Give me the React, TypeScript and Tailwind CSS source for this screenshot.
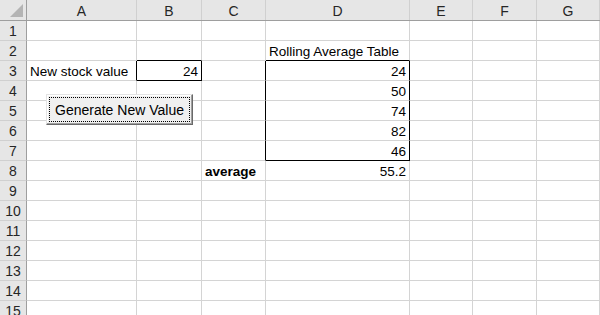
const cols = ["A", "B", "C", "D", "E", "F", "G"];
const colW = [
  "w-[110px]",
  "w-[65px]",
  "w-[64px]",
  "w-[144px]",
  "w-[63px]",
  "w-[64px]",
  "flex-1",
];

type Cell = { text?: string; align?: "left" | "right"; bold?: boolean };

// cell contents, keyed by "row:col"
const data: Record<string, Cell> = {
  "2:3": { text: "Rolling Average Table" },
  "3:0": { text: "New stock value" },
  "3:1": { text: "24", align: "right" },
  "3:3": { text: "24", align: "right" },
  "4:3": { text: "50", align: "right" },
  "5:3": { text: "74", align: "right" },
  "6:3": { text: "82", align: "right" },
  "7:3": { text: "46", align: "right" },
  "8:2": { text: "average", bold: true },
  "8:3": { text: "55.2", align: "right" },
};

// which cells carry the black box edges
const blackRight = new Set(["3:0", "3:1", "3:2", "4:2", "5:2", "6:2", "7:2", "3:3", "4:3", "5:3", "6:3", "7:3"]);
const blackBottom = new Set(["2:1", "3:1", "2:3", "7:3"]);

function Row({ n }: { n: number }) {
  return (
    <div className="flex h-[20px] shrink-0">
      <div className="w-[27px] shrink-0 bg-[#e6e6e6] border-r border-b border-r-[#9e9e9e] border-b-[#d0d0d0] flex items-center justify-center text-[14px] text-[#262626] leading-none pt-[1px]">
        {n}
      </div>
      {cols.map((_, c) => {
        const key = `${n}:${c}`;
        const cell = data[key];
        return (
          <div
            key={c}
            className={`${colW[c]} shrink-0 border-r border-b flex items-end pb-[2px] px-[3px] text-[13.5px] leading-none text-black whitespace-nowrap ${
              blackRight.has(key) ? "border-r-black" : "border-r-[#d4d4d4]"
            } ${blackBottom.has(key) ? "border-b-black" : "border-b-[#d4d4d4]"} ${
              cell?.align === "right" ? "justify-end" : "justify-start"
            } ${cell?.bold ? "font-bold" : ""}`}
          >
            {cell?.text}
          </div>
        );
      })}
    </div>
  );
}

export default function App() {
  return (
    <div
      className="relative w-[600px] h-[315px] overflow-hidden bg-white flex flex-col"
      style={{ fontFamily: '"Liberation Sans", Arial, sans-serif' }}
    >
      {/* column headers */}
      <div className="flex h-[21px] shrink-0 bg-[#e6e6e6] border-b border-[#9e9e9e]">
        <div className="w-[27px] shrink-0 border-r border-[#9e9e9e] relative">
          <svg className="absolute right-[3px] bottom-[3px]" width="13" height="13" viewBox="0 0 13 13">
            <polygon points="13,0 13,13 0,13" fill="#b4b4b4" />
          </svg>
        </div>
        {cols.map((c, i) => (
          <div
            key={c}
            className={`${colW[i]} shrink-0 border-r border-[#d0d0d0] flex items-center justify-center text-[14px] text-[#262626] leading-none pt-[1px]`}
          >
            {c}
          </div>
        ))}
      </div>

      {Array.from({ length: 15 }, (_, i) => (
        <Row key={i} n={i + 1} />
      ))}

      {/* form button floating over the sheet */}
      <div className="absolute left-[46px] top-[94px] w-[147px] h-[31px] bg-[#f0f0f0] border border-t-[#e3e3e3] border-l-[#e3e3e3] border-r-[#696969] border-b-[#696969] shadow-[inset_-1px_-1px_0_#a0a0a0,inset_1px_1px_0_#ffffff] p-[2px]">
        <div className="w-full h-full border border-dotted border-black flex items-center justify-center text-[14px] leading-none text-black">
          Generate New Value
        </div>
      </div>
    </div>
  );
}
